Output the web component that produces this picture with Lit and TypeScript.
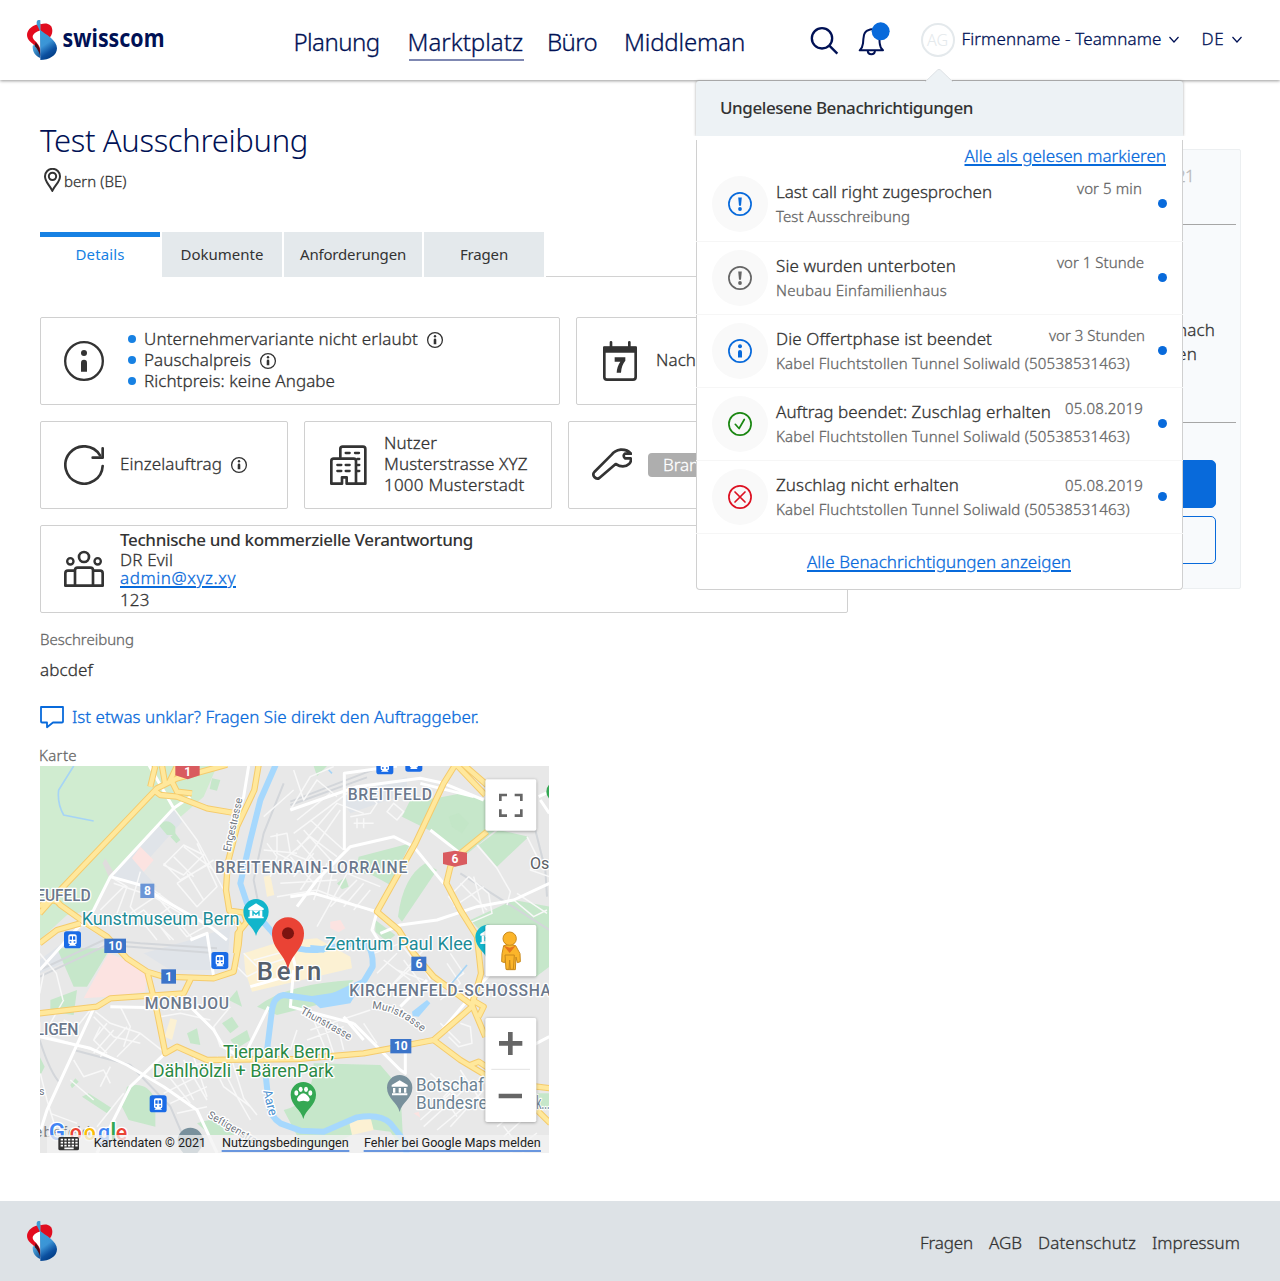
import { LitElement, html, svg, css, nothing, TemplateResult } from 'lit';
import { customElement } from 'lit/decorators.js';
import { styleMap } from 'lit/directives/style-map.js';

const FAMILY = '"Noto Sans", "Open Sans", sans-serif';
const ctx = document.createElement('canvas').getContext('2d')!;

/** Tracks a single line of text so that it occupies `width` pixels. */
function fit(text: string, width: number, size = 17, weight = 350): TemplateResult {
  ctx.font = `${weight} ${size}px ${FAMILY}`;
  const spacing = (width - ctx.measureText(text).width) / text.length;
  return html`<span
    style=${styleMap({
      letterSpacing: `${spacing.toFixed(3)}px`,
      fontSize: `${size}px`,
      fontWeight: `${weight}`,
      whiteSpace: 'nowrap',
      fontVariantLigatures: 'none',
      webkitTextStroke: weight === 350 ? '0.3px currentColor' : '0',
    })}>${text}</span>`;
}

const brandMark = html`<svg width="30" height="40" viewBox="81 60 90 120">
  <defs>
    <linearGradient id="b1" x1="0.2" y1="0" x2="0.6" y2="1">
      <stop offset="0" stop-color="#3a9edb" /><stop offset="0.45" stop-color="#3b94d6" />
      <stop offset="0.75" stop-color="#0c50a0" /><stop offset="1" stop-color="#003a80" />
    </linearGradient>
    <linearGradient id="b2" x1="0" y1="0" x2="1" y2="1">
      <stop offset="0" stop-color="#5ab4e8" /><stop offset="1" stop-color="#0d4f94" />
    </linearGradient>
  </defs>
  <path d="M122 71C100 73 81 87 81 105c0 16 15 23 24 33 7 9 12 19 16 30z" fill="#e30b1e" />
  <path d="M122 73c16-6 35-2 35 20 0 10-5 17-10 22L121 92z" fill="#e00d1f" />
  <path d="M121 91C108 96 99 102 98 110c0 8 12 15 17 24 3 5 5 9 6 14z" fill="#fff" />
  <path d="M98 137c-1 20 9 31 23 37v-14C115 148 108 138 103 134z" fill="url(#b2)" />
  <path d="M107 127c9 10 14 19 14 41-4-12-9-22-17-30z" fill="#4a0a14" />
  <path d="M120 90c16 12 51 30 51 55 0 22-24 35-50 35z" fill="url(#b1)" />
  <path d="M111 63q4-5 10-2v34l-8-16q-5-8-2-16z" fill="#3f9bd3" />
</svg>`;

const smallInfo = html`<svg class="hint" width="18" height="18" viewBox="0 0 18 18">
  <circle cx="9" cy="9" r="7.4" fill="none" stroke="#333" stroke-width="1.3" />
  <circle cx="9" cy="5.3" r="1.2" fill="#333" />
  <path d="M7.700 13.300V9q0-1.400 1.300-1.400T10.300 9v4.300z" fill="#333" />
</svg>`;

const icon = (box: string, body: TemplateResult) =>
  html`<svg class="icon" width="40" height="40" viewBox=${box} fill="none" stroke="#333"
    stroke-width="8" stroke-linecap="round" stroke-linejoin="round">${body}</svg>`;

const icons = {
  info: icon('132 123 120 120', svg`<circle cx="192" cy="183" r="56.500" stroke-width="7"/>
    <circle cx="192" cy="159" r="9" fill="#333" stroke="none"/>
    <path d="M183 215v-27q0-9 9-9t9 9v27z" fill="#333" stroke="none"/>`),
  calendar: icon('480 123 120 120', svg`<path d="M493 143h94v88q0 8-8 8h-78q-8 0-8-8z"/>
    <path d="M490 140h100v18h-100z" fill="#333" stroke="none"/>
    <path d="M513 127v18M568 127v18"/>
    <path d="M524 172h32v10q-12 14-13 36h-13q1-19 11-33h-17z" fill="#333" stroke="none"/>`),
  cycle: icon('132 435 120 120', svg`<path d="M248 498a56 56 0 1 1-8-32"/>
    <path d="M218 473h30v-28"/>`),
  building: icon('924 435 120 120', svg`<path d="M961 472v-25q0-7 7-7h61q7 0 7 7v104h-28"/>
    <path d="M934 551v-68q0-7 7-7h60q7 0 7 7v68h-28v-19h-14v19z"/>
    <path d="M977 459h12M1005 459h12M952 495h12M977 495h12M952 513h12M977 513h12M1012 477h6M1012 495h6M1012 513h6" stroke-width="7"/>`),
  team: icon('132 747 120 120', svg`<circle cx="192" cy="771" r="15"/>
    <circle cx="151" cy="784" r="9.500" stroke-width="7"/><circle cx="233" cy="784" r="9.500" stroke-width="7"/>
    <path d="M165 857v-46q0-8 8-8h38q8 0 8 8v46"/>
    <path d="M163 812h-19q-8 0-8 8v37h112v-37q0-8-8-8h-19"/>`),
  tool: icon('456 435 120 120', svg`<path d="M573 461q-11-13-31-12-18 3-27 15l-52 52q-6 7 0 15 7 8 15 3l49-42q24 15 41-1 7-8 4-16h-17q-8-8 0-14z"/>`),
};

const statusMarks: Record<string, TemplateResult> = {
  alert: svg`<path d="M10.200 5.500h3.600l-.8 8.300h-2z" fill="currentColor" stroke="none"/>
    <circle cx="12" cy="17" r="1.900" fill="currentColor" stroke="none"/>`,
  info: svg`<circle cx="12" cy="7.200" r="2" fill="currentColor" stroke="none"/>
    <path d="M10 18.500v-5.500q0-2 2-2t2 2v5.500z" fill="currentColor" stroke="none"/>`,
  check: svg`<path d="M7.300 12.300l3.800 4.200L16.300 7.500"/>`,
  cross: svg`<path d="M7 7l10 10M17 7L7 17"/>`,
};

const notices = [
  { mark: 'alert', tone: 'blue', title: ['Last call right zugesprochen', 216], sub: ['Test Ausschreibung', 134], time: ['vor 5 min', 65], inset: 2, first: true },
  { mark: 'alert', tone: 'gray', title: ['Sie wurden unterboten', 180], sub: ['Neubau Einfamilienhaus', 171], time: ['vor 1 Stunde', 87], inset: 0 },
  { mark: 'info', tone: 'blue', title: ['Die Offertphase ist beendet', 216], sub: ['Kabel Fluchtstollen Tunnel Soliwald (50538531463)', 354], time: ['vor 3 Stunden', 96], inset: -1 },
  { mark: 'check', tone: 'green', title: ['Auftrag beendet: Zuschlag erhalten', 275], sub: ['Kabel Fluchtstollen Tunnel Soliwald (50538531463)', 354], time: ['05.08.2019', 78], inset: 1 },
  { mark: 'cross', tone: 'red', title: ['Zuschlag nicht erhalten', 183], sub: ['Kabel Fluchtstollen Tunnel Soliwald (50538531463)', 354], time: ['05.08.2019', 78], inset: 1, last: true },
] as const;

@customElement('city-map')
export class CityMap extends LitElement {
  static styles = css`
    :host { display: block; }
    svg { display: block; }
    text { font-family: Roboto, sans-serif; }
    .halo { stroke: #fff; stroke-width: 8px; paint-order: stroke; stroke-linejoin: round; }
    .area { fill: #6b788c; font-size: 47px; font-weight: 500; }
    .poi { fill: #1d8c96; font-size: 55px; }
    .park { fill: #2b8a44; font-size: 55px; }
    .office { fill: #6c8394; font-size: 55px; }
    .city { fill: #56606d; font-size: 77px; font-weight: 500; }
    .street { fill: #6f7680; font-size: 32px; }
    .plain { fill: #5b6066; font-size: 50px; }
    .badge { fill: #fff; font-size: 36px; font-weight: 700; text-anchor: middle; }
    .legal { fill: #222; font-size: 39px; }
    .green { fill: #c6e7ca; }
    .forest { fill: #d0ecd0; }
    .rose { fill: #fce3e1; }
    .sand { fill: #fcf1d3; }
    .block { fill: #e0e4e9; }
    .minor { stroke: #f8f8f8; stroke-width: 4.500px; fill: none; stroke-linejoin: round; }
    .lane { stroke: #fff; stroke-width: 9px; fill: none; stroke-linejoin: round; }
    .rail { stroke: #d3d6da; stroke-width: 6px; fill: none; }
    .case { stroke: #f5cb6c; fill: none; stroke-width: 19px; stroke-linejoin: round; }
    .main { stroke: #ffe89c; fill: none; stroke-width: 13px; stroke-linejoin: round; }
    .water { stroke: #a6d8fd; fill: none; stroke-width: 18px; stroke-linejoin: round; }
    .lake { fill: #a6d8fd; }
    .btn { fill: #fff; filter: drop-shadow(0 2px 5px rgba(0, 0, 0, 0.35)); }
  `;

  private label(t: string, x: number, y: number, w: number, cls: string) {
    const adjust = cls === 'area' || cls === 'city' ? 'spacing' : 'spacingAndGlyphs';
    return svg`<text class="halo ${cls}" x=${x} y=${y} textLength=${w} lengthAdjust=${adjust}>${t}</text>`;
  }
  private badge(t: string, x: number, y: number, w: number, color = '#3b74c9') {
    return svg`<rect x=${x} y=${y} width=${w} height="43" fill=${color}/><text class="badge" x=${x + w / 2} y=${y + 34}>${t}</text>`;
  }
  private train(x: number, y: number) {
    return svg`<g transform="translate(${x} ${y})"><rect width="51" height="51" rx="8" fill="#1a6be6"/>
      <path d="M13 14q0-5 6-5h13q6 0 6 5v20q0 5-6 5h-13q-6 0-6-5z M14 43l6-6h11l6 6z" fill="#fff"/>
      <path d="M17 15h7v10h-7zM27 15h7v10h-7zM17 30h5v4h-5zM29 30h5v4h-5z" fill="#1a6be6"/></g>`;
  }
  private pin(x: number, y: number, color: string, body: unknown) {
    return svg`<g transform="translate(${x} ${y})"><path d="M0 73C-6 45-38 32-38 0a38 38 0 0 1 76 0C38 32 6 45 0 73z" fill=${color}/>${body}</g>`;
  }

  render() {
    const temple = svg`<path d="M-24-8L0-22 24-8v5h-48zM-20 1h7v14h-7zM-3 1h7v14h-7zM13 1h7v14h-7zM-23 17h46v6h-46z" fill="#fff"/>`;
    const museum = svg`<path d="M-23-10L0-25 23-10v5h-46z M-19-4h38v20h-38z M-23 15h46v5h-46z" fill="#fff"/><path d="M-9 12V0L0 8 9 0v12" stroke="#12b5cb" stroke-width="4" fill="none"/>`;
    const yellow = [
      'M28 520L90 450 380 145 440 115 590 74',
      'M28 500Q70 465 90 495L160 545 230 590 290 655 350 695 400 710 550 715 610 695 625 615 630 560 600 515',
      'M28 610L80 570 150 550',
      'M685 74L672 150 620 260 592 370 587 450 597 512 640 518 650 545 622 580 617 640',
      'M370 150L390 165 440 170 530 205 630 222M360 140L375 78M405 135L395 78M415 130L440 78M420 115L440 155 485 160',
      'M28 820L200 800 240 775 460 760 482 715',
      'M352 700L378 805 405 940 440 920 530 960 800 957 1000 940 1080 925 1210 900 1325 800 1338 740',
      'M1275 74L1240 130 1155 310 1040 515 1105 570 1150 640 1210 710 1325 795',
      'M1278 74L1365 165M1300 74L1370 135',
      'M1370 275L1290 340 1260 380 1248 430 1290 510 1340 590 1352 700 1325 795 1365 890',
      'M1325 780L1360 800 1345 830',
      'M1210 900L1290 960 1365 1005 1480 1035 1560 1045M1320 975L1345 965 1375 985M1510 1100L1560 1150',
    ];
    return html`<svg width="509" height="387" viewBox="29 78 1527 1161" preserveAspectRatio="none">
      <rect x="28" y="78" width="1530" height="1165" fill="#e8e8e8" />
      <path class="forest" d="M28 78H560L520 170 440 240 430 205 240 410 190 510 110 525 28 600z" />
      <path class="block" d="M430 205L455 245 330 385 380 440 350 450 245 410zM28 660L160 560 230 600 200 625 28 700zM340 640L480 600 600 560 590 690 420 690zM930 170l200-60v50l-170 60z" />
      <path class="green" d="M545 115l25 5-10 32-22-5zM385 255q25-25 50 5v25h-25zM420 290l15-10 15 20-12 10zM850 78h40l-30 30zM80 625H240L170 740 130 740zM60 780l80-30-10 75-70-10zM28 950l15 30-15 30z
        M1215 175l80-15 90 25 40 60-130 110-80-75-100-50 25-50zM1345 315l60-45 90 20-95 90zM985 350l155-40-60 125-55-30-50-10zM1185 370l35 20-105 155-12-15q15-120 82-160zM1035 540l60 45-25 20-35-30zM920 430l25-20 10 30-20 8z
        M1320 540l130-60 107 20v180l-40 30-150-120zM1520 1060h36v50l-36-5zM620 750l15 50-40-20zM575 850l30-20 20 30-25 20zM470 880l30-15 10 50-30-5zM600 900l50-30 10 30-40 25z
        M145 1025l-20 20-5-10 15-20zM155 1070l20-10 70 45-15 15zM290 1040q60-20 85 40v80l-80-20-20-40zM500 1150q120-40 110 35h-70z
        M760 1110q90-20 90-140l200 5 60 70 10 190-40-60-80-10-110 60-80-20zM680 800q90-70 290-80l-50 60-180 45z" />
      <path d="M1255 230l30-10 30 30-20 30-30-20z" opacity=".5" fill="#bfe5c3" />
      <path class="rose" d="M330 320l40 40-30 35-35-40zM160 775L235 640 350 685 345 755 230 770zM900 545l30-5 15 25-20 12-25-12zM1150 1120l15-5 5 18z" />
      <path d="M225 355l30 50-20 5-18-40z" fill="#dfdcdc" />
      <path class="sand" d="M640 640l110-35 110-10 100 55 5 35-300 70-20-60zM700 410l20-5 12 60-22 5zM420 835l20 5-15 60-22-10zM955 1140l65-10 10 40-65 15z" />
      <g class="rail">
        <path d="M780 185L1000 100 1060 78M780 195L1010 112M28 900Q60 1000 90 1030M130 930L300 975 420 1100 480 1239M1290 400L1557 570M1515 270L1545 390 1550 470M28 690L220 600 330 610 560 625M760 130L700 280 670 420 690 520M28 710L230 615 560 640" />
      </g>
      <g class="minor">
        <path d="M430 205L500 300 580 450M240 410L290 440 260 520M250 430L370 470 500 550M330 395L300 500 380 600M280 440L210 510M370 450l120 90M400 375l60-60 60 30-60 60zM430 350l60 60M460 320l90 70M400 370l50 50 90-50M440 430l110-70M500 310l60 130-60 60-60-70M470 400l50 80M380 470l110 130M300 520l90-60M280 550l60-40 90 90M340 560l80-60M360 520l60 80M420 530l50 60 90-50" />
        <path d="M790 90l30 90 40-60 60 50M780 210l60-100 70-30M800 240l100-80M790 280l160-120M800 330l120-140 80 30M820 370l110-160M760 360l80-70 80 60M840 240l100 90M820 270l90 100M800 300l80 90M780 350l70 80M790 410l60-70M810 450l60-90M850 480l40-110M890 470l20-90M750 430l170-10M740 470l120-20M860 560l90-160 100 40M900 500l80-80M940 500l60-70M970 510l50-60M860 450l180 70" />
        <path d="M720 290l50-10 10 60 50 20M710 310l30 40-20 60M740 280v60l60 30M700 330l100 10M960 230l60-10 20-30-50-50M970 250h60M980 235v30M1000 235v30M1070 215l20-25 30 25-20 25zM700 230l90-80" />
        <path d="M195 815L240 850 330 880 400 935M190 830l60 60 80 20M210 860l-20 40 40 40M230 850l-40 50M250 870l-60 70M290 860l-80 90M330 880l-70 70M270 800l30 60-20 60M390 830l60-10 90 20M60 850l40-70M100 840l40 20 40-50M130 960l30 50 60-20 20 40M240 980l-30 60M120 1020l70 60M280 1060l-80 100" />
        <path d="M400 990l80 100M430 970l60 110M460 960l70 120M490 950l40 120M400 1060l120-60M420 1090l110-50M440 1120l90-20M370 1020l140-50M540 960l40 80 80 60M560 950l60 120 40 70M600 945l40 130 40 50M600 800l-50 60 20 60 80 30" />
        <path d="M840 870l180-60M830 900l110-40M850 840l40 100M880 850l30 90M920 850l20 80M800 870l-20 60M1000 850l40 60M1040 700l60-60M1080 740l100-110M1100 690l80 30M1060 660l80 60M1120 660l60 80M1150 630l50 90M1180 650l-110 100M1230 780l60-50-40-60M1260 640l40 60-70 50" />
        <path d="M1290 850l30 10 5 50-40 10-30-30M1230 850l60 60M1300 1010l-60 60 40 60M1200 1000l80 70M1170 1140l90-80M1180 1160l120-110M1220 1170l120-100M1260 1160l100-110M1290 990l60 90 70 60M1400 1160l120-100M1420 1190l90-80M1480 1239l-60-80M1440 1239l80-60" />
        <path d="M1255 470l60-60 60 50 10 60-70 30zM1290 430l80 80M1330 410l30 110M1270 500l90-60M1340 315l60 70 40 70-10 40M1490 290l30 60-20 40 57 20M1450 480l60 50 40-20M1460 460l90 60" />
        <path d="M620 680l30 30 40-20 40 30M640 640l60 60M670 660l110-30M690 680l90-30M1030 640l80-30 40 50M28 640l50 60 20 80M40 700l-12 60M28 880l60 20 100 30M30 1000l20 80 30 100M60 1120l80 30" />
      </g>
      <g class="lane">
        <path d="M355 74L430 205 480 170M430 205L240 410 190 510 28 690M655 78L640 170 600 300M240 410L330 435 400 480 540 560 590 600M660 740L800 700 780 620M28 890L180 925 290 975 400 1040 500 1110 560 1239M190 805L50 1110 28 1180M410 935L300 1040 200 1239M480 600L530 580 550 710M480 800L550 870 580 920 640 960M640 950L715 800M240 800L380 803M970 850L1110 990 1125 1000V930M970 850L780 800 790 690M940 830L1000 900" />
        <path d="M942 330V100L1100 78M780 210L980 140 1170 115 1240 130 1360 180M1170 130L1330 170M800 500L860 420 960 320 1090 290 1150 320 1240 430M780 470L850 460 1040 515 1025 570 1050 610M1050 580L1110 555 1220 540 1340 500 1450 480 1557 430M1200 270L1290 340M1525 170L1557 155M1530 180L1557 220M1210 900L1380 700M1190 720L1110 800M1557 890L1500 920" />
      </g>
      <path d="M130 78L85 150Q80 190 100 225L190 243M1260 735l50-60M895 90l10 10" stroke="#a6d4f5" stroke-width="5" fill="none" />
      <path class="water" d="M738 70L690 180 660 300 630 430 650 490 720 570Q770 635 860 630L960 612Q1030 590 1027 680L1000 725 880 782 760 765Q730 770 725 810L712 915 705 995 715 1090Q720 1130 750 1150L810 1172 880 1175 980 1132Q1050 1120 1080 1150L1120 1200 1130 1245" />
      <path class="lake" d="M830 770l70-10 90-20-30 50-90 15zM1145 815l45-35 10 10-35 40-18-2zM840 615l60 5-20 18-40-5z" />
      ${yellow.map((d) => svg`<path class="case" d=${d}/>`)}
      ${yellow.map((d) => svg`<path class="main" d=${d}/>`)}

      ${this.badge('8', 330, 431, 42, '#6b95d6')} ${this.badge('10', 222, 596, 65)}
      ${this.badge('1', 393, 688, 44)} ${this.badge('6', 1143, 650, 45)} ${this.badge('10', 1080, 897, 63)}
      <path d="M435 70h73v36l-36 12-37-12z" fill="#d95b5f" /><text class="badge" x="472" y="107">1</text>
      <path d="M1238 338l36-6 36 6v34l-36 8-36-8z" fill="#d95b5f" /><text class="badge" x="1274" y="368">6</text>
      ${this.train(101, 574)} ${this.train(543, 636)} ${this.train(358, 1066)} ${this.train(1038, 52)} ${this.train(1125, 44)}

      ${this.label('EUFELD', 18, 482, 163, 'area')} ${this.label('BREITENRAIN-LORRAINE', 554, 400, 577, 'area')}
      ${this.label('BREITFELD', 952, 181, 253, 'area')} ${this.label('MONBIJOU', 343, 807, 253, 'area')}
      ${this.label('LIGEN', 16, 885, 128, 'area')} ${this.label('KIRCHENFELD-SCHOSSHA', 957, 767, 605, 'area')}
      ${this.label('Os', 1499, 388, 58, 'plain')}
      <text class="halo street" transform="translate(600 336) rotate(-77)" textLength="164">Engestrasse</text>
      <path id="muri" d="M1025 806Q1100 810 1170 872" fill="none" />
      <text class="halo street"><textPath href="#muri">Muristrasse</textPath></text>
      <text class="halo street" transform="translate(808 818) rotate(29)" textLength="170">Thunstrasse</text>
      <text class="halo street" transform="translate(530 1131) rotate(30)" textLength="180">Seftigenstras</text>
      <text class="halo street" transform="translate(26 1066)" >s</text>
      <text class="halo" transform="translate(698 1053) rotate(76)" font-size="38" fill="#4a90cf">Aare</text>
      ${this.label('Kunstmuseum Bern', 154, 555, 473, 'poi')} ${this.label('Zentrum Paul Klee', 884, 629, 442, 'poi')}
      ${this.label('Tierpark Bern,', 578, 955, 333, 'park')} ${this.label('Dählhölzli + BärenPark', 367, 1010, 542, 'park')}
      ${this.label('Botschaf', 1157, 1052, 204, 'office')} ${this.label('Bundesre', 1157, 1106, 215, 'office')}
      ${this.label('k...', 1518, 1106, 40, 'office')}

      ${this.pin(677, 515, '#12b5cb', museum)} ${this.pin(1373, 592, '#12b5cb', museum)}
      ${this.pin(819, 1064, '#34a853', svg`<g fill="#fff"><path d="M0-4q12 2 19 16 0 10-10 8-9-3-18 0-10 2-10-8Q-12-2 0-4z"/><ellipse cx="-21" cy="-5" rx="6" ry="8"/><ellipse cx="-8" cy="-16" rx="6" ry="8"/><ellipse cx="8" cy="-16" rx="6" ry="8"/><ellipse cx="21" cy="-5" rx="6" ry="8"/></g>`)}
      ${this.pin(1108, 1043, '#78909c', temple)} ${this.pin(480, 1201, '#78909c', nothing)}
      <circle cx="1578" cy="155" r="30" fill="#34a853" />
      ${this.label('Bern', 679, 720, 194, 'city')}
      <path d="M773 692C768 645 725 630 725 580a48 48 0 0 1 96 0C821 630 778 645 773 692z" fill="#ea4335" />
      <circle cx="773" cy="580" r="18" fill="#7d1410" />

      <text x="12" y="1190" font-size="45" fill="#7c7f84" textLength="168">ebefeld</text>
      <g font-size="72" font-weight="500" class="halo">
        <text x="55" y="1200" fill="#4285f4">G</text><text x="118" y="1200" font-size="64" fill="#ea4335">o</text>
        <text x="160" y="1200" font-size="64" fill="#fbbc05">o</text><text x="203" y="1200" font-size="64" fill="#4285f4">g</text>
        <text x="240" y="1200" fill="#34a853">l</text><text x="256" y="1200" font-size="64" fill="#ea4335">e</text>
      </g>
      <rect x="50" y="1185" width="1507" height="55" fill="#f3f3f3" opacity=".75" />
      <rect x="84" y="1191" width="62" height="40" rx="5" fill="#333" />
      <path d="M91 1199h7m4 0h7m4 0h7m4 0h7m4 0h7M91 1208h7m4 0h7m4 0h7m4 0h7m4 0h7M91 1217h7m4 0h7m4 0h7m4 0h7m4 0h7M102 1225h28" stroke="#fff" stroke-width="5" />
      <text class="legal" x="190" y="1222" textLength="337" lengthAdjust="spacingAndGlyphs">Kartendaten © 2021</text>
      <text class="legal" x="575" y="1222" textLength="380" lengthAdjust="spacingAndGlyphs">Nutzungsbedingungen</text>
      <text class="legal" x="1001" y="1222" textLength="530" lengthAdjust="spacingAndGlyphs">Fehler bei Google Maps melden</text>
      <path d="M574 1233h383M1000 1233h532" stroke="#3c78d8" stroke-width="4" />

      <rect class="btn" x="1365" y="118" width="153" height="154" rx="5" />
      <path d="M1410 183v-18h20M1453 165h20v18M1473 208v19h-20M1430 227h-20v-19" fill="none" stroke="#666" stroke-width="8" />
      <rect class="btn" x="1365" y="555" width="153" height="154" rx="5" />
      <g stroke="#c98a1c" stroke-width="3" fill="#fbb52a">
        <path d="M1420 617q18-8 36 0l13 24 1 24-9 3-4-17-2 38h-26l-2-38-4 17-9-3 1-24z" />
        <path d="M1424 645h28l-3 43h-9l-2-28-2 28h-9z" />
        <circle cx="1438" cy="596" r="20" />
      </g>
      <path d="M1420 617l18 22 18-22-18 6z" fill="#e5741d" />
      <rect class="btn" x="1365" y="834" width="153" height="312" rx="5" />
      <path d="M1406 910h70M1440 876v69M1405 1068h70" stroke="#666" stroke-width="14" />
      <path d="M1383 988h116" stroke="#e2e2e2" stroke-width="3" />
    </svg>`;
  }
}

@customElement('app-root')
export class AppRoot extends LitElement {
  static styles = css`
    :host { display: block; position: relative; width: 1280px; height: 1281px; overflow: hidden; background: #fff; color: #333; font-family: 'Noto Sans', 'Open Sans', sans-serif; font-size: 17px; }
    * { box-sizing: border-box; }
    svg { display: block; flex: none; }
    .top { display: flex; align-items: center; height: 80px; padding-left: 27px; color: #001155; box-shadow: 0 1px 3px rgba(0, 0, 0, 0.4); line-height: 34px; }
    .word { margin-left: 5px; overflow: visible; }
    .nav { display: flex; margin-left: 127.5px; width: 516.5px; }
    .nav-item { position: relative; padding: 6px 0 2px; line-height: 34px; height: 42px; }
    .nav-item.n1 { margin-left: 28px; }
    .nav-item.n2 { margin-left: 24px; }
    .nav-item.n3 { margin-left: 27px; }
    .nav-item.on::after { content: ''; position: absolute; left: 1px; right: -1px; bottom: 0; height: 2px; background: #7f88b2; }
    .find { margin-top: 2px; }
    .bell { margin: -2px 0 0 18px; }
    .avatar { width: 34px; height: 34px; border: 2px solid #e4e9ec; border-radius: 50%; margin-left: 29.5px; color: #e4e9ec; display: flex; align-items: center; justify-content: center; }
    .who { margin: -2px 0 0 7px; }
    .chev { margin-left: 6px; }
    .lang { margin: -2px 0 0 22px; }
    .body { display: grid; grid-template-columns: 809px 377px; column-gap: 15px; padding-left: 40px; height: 1121px; align-items: start; }
    .title { margin: 39px 0 0 0; line-height: 40px; color: #001155; font-weight: 300; -webkit-text-stroke: 0.2px; }
    .place { display: flex; height: 24px; line-height: 24px; margin: 8px 0 0 4px; }
    .place span { margin-left: 3px; padding-top: 1px; }
    .tabs { display: flex; gap: 2px; margin-top: 40px; height: 45px; }
    .tab { width: 120px; background: #e4e9ec; display: flex; align-items: center; justify-content: center; line-height: 20px; padding-bottom: 1px; }
    .tab.wide { width: 138px; }
    .tab.on { background: #fff; border-top: 5px solid #1781e3; padding-bottom: 6px; color: #1781e3; }
    .tab-rest { flex: 1; border-bottom: 1px solid #d2d2d2; }
    .cards { display: flex; flex-direction: column; gap: 16px; margin-top: 40px; width: 808px; }
    .row { display: flex; gap: 16px; }
    .card { height: 88px; border: 1px solid #d0d0d0; border-radius: 2px; display: flex; align-items: center; gap: 16px; padding-left: 23px; flex: 1; }
    .card.c520 { flex: none; width: 520px; }
    .card.c248 { flex: none; width: 248px; }
    .card.full { flex: none; }
    .copy { line-height: 21px; padding-bottom: 3px; }
    .line { display: flex; align-items: center; height: 21px; white-space: nowrap; }
    .list { padding-left: 8px; }
    .list .line::before { content: ''; width: 8px; height: 8px; border-radius: 50%; background: #1781e3; margin: 1px 8px 0 0; }
    .hint { margin: 2px 0 0 8px; }
    .chip { background: #aeaeae; color: #fff; border-radius: 4px; height: 24px; width: 120px; line-height: 23px; padding-left: 15px; }
    .contact { line-height: 20px; padding-top: 1px; }
    .contact div { height: 20px; white-space: nowrap; }
    .contact .mail { margin: -2px 0 2px; }
    .link { color: #086adb; border: 0; position: relative; display: inline-block; text-decoration: underline; text-decoration-thickness: 2px; text-underline-offset: 2px; white-space: nowrap; }
    .caption { color: #666; line-height: 20px; height: 20px; margin-top: 16px; }
    .text { line-height: 24px; height: 24px; margin-top: 9px; }
    .ask { display: flex; align-items: center; gap: 8px; color: #086adb; line-height: 24px; height: 24px; margin-top: 23px; }
    .ask span { margin-top: -1px; }
    .map-label { margin: 16px 0 1px -1px; }
    .side { margin-top: 69px; height: 440px; border: 1px solid #eceff1; border-radius: 2px; background: #f8fafc; padding: 0 24px; line-height: 24px; display: flex; flex-direction: column; }
    .side .date { text-align: right; margin: 14px 22px 0 0; color: #b9b9b9; }
    .side hr { margin: 36px -20px 0; border: 0; border-top: 1px solid #a6a6a6; flex: none; height: 0; }
    .side .note { text-align: right; margin: 93px 1px 0 0; height: 48px; }
    .side .note .end { padding-right: 18px; }
    .side hr.second { margin-top: 56px; }
    .btn { height: 48px; border-radius: 5px; border: 1px solid #086adb; flex: none; }
    .btn.fill { background: #086adb; margin: 37px 0 8px; }
    .foot { height: 80px; background: #dde2e6; display: flex; align-items: center; padding: 0 40px 0 27px; }
    .foot nav { margin-left: auto; display: flex; gap: 16px; padding-top: 2px; }
    .pop { position: absolute; left: 696px; top: 81px; width: 487px; }
    .pop-head { position: relative; height: 55px; background: #edf2f5; box-shadow: 0 0 3px rgba(0, 0, 0, 0.35); border-radius: 3px 3px 0 0; padding-left: 24px; line-height: 54px; clip-path: inset(-20px -4px 0 -4px); }
    .tip { position: absolute; left: 229px; top: -13px; }
    .pop-body { background: #fff; height: 454px; display: flex; flex-direction: column; padding-top: 4px; }
    .pop-frame { border: 1px solid #d0d0d0; border-top: 0; border-radius: 0 0 4px 4px; flex: 1; }
    .mark-all { display: flex; justify-content: flex-end; height: 28px; padding: 4px 16px 0 0; line-height: 24px; }
    .item { display: flex; height: 73px; margin: 0 -1px; padding: 0 16px; border-bottom: 1px solid #f6f6f6; }
    .item.first { height: 74px; }
    .disc { width: 56px; height: 56px; margin: 8px 8px 0 0; border-radius: 50%; background: #f9f9f9; display: flex; align-items: center; justify-content: center; flex: none; }
    .blue { color: #086adb; }
    .gray { color: #666; }
    .green { color: #1b8712; }
    .red { color: #dd1122; }
    .main { padding-top: 12px; line-height: 24px; width: 0; flex: 1; white-space: nowrap; }
    .sub { line-height: 20px; margin-top: 2px; color: #666; }
    .time { margin-top: 10px; line-height: 20px; height: 20px; color: #666; white-space: nowrap; }
    .time.low { margin-top: 14px; }
    .dot { width: 9px; height: 9px; border-radius: 50%; background: #086adb; margin: 31px 0 0 14px; flex: none; }
    .all { display: flex; justify-content: center; padding: 16px 1px 0 0; line-height: 24px; }
  `;

  private chevron() {
    return html`<svg class="chev" width="12" height="8" viewBox="0 0 12 8"><path d="M1.500 1l4.500 5 4.500-5" fill="none" stroke="#001155" stroke-width="1.200" /></svg>`;
  }

  private notice(n: (typeof notices)[number]) {
    return html`<div class="item ${'first' in n ? 'first' : ''}">
      <div class="disc ${n.tone}">
        <svg width="24" height="24" viewBox="0 0 24 24" fill="none" stroke="currentColor" stroke-width="1.700" stroke-linecap="round" stroke-linejoin="round">
          <circle cx="12" cy="12" r="11.100" />${statusMarks[n.mark]}
        </svg>
      </div>
      <div class="main"><div>${fit(n.title[0], n.title[1])}</div><div class="sub">${fit(n.sub[0], n.sub[1], 15)}</div></div>
      <div class="time ${'last' in n ? 'low' : ''}" style=${styleMap({ transform: `translateX(${-n.inset}px)` })}>${fit(n.time[0], n.time[1], 15)}</div>
      <div class="dot"></div>
    </div>`;
  }

  render() {
    return html`
      <header class="top">
        ${brandMark}
        <svg class="word" width="104" height="40" viewBox="0 0 104 40">
          <text x="0.500" y="26.500" font-size="25" font-weight="700" fill="#001155" textLength="102" lengthAdjust="spacingAndGlyphs">swisscom</text>
        </svg>
        <nav class="nav">
          <div class="nav-item">${fit('Planung', 86, 24)}</div>
          <div class="nav-item n1 on">${fit('Marktplatz', 115.5, 24)}</div>
          <div class="nav-item n2">${fit('Büro', 50, 24)}</div>
          <div class="nav-item n3">${fit('Middleman', 121, 24)}</div>
        </nav>
        <svg class="find" width="30" height="30" viewBox="90 81 90 90" fill="none" stroke="#001155" stroke-width="7">
          <circle cx="126" cy="118" r="30.500" /><path d="M148 140l24 24" />
        </svg>
        <svg class="bell" width="33" height="34" viewBox="234 66 99 102" fill="none" stroke="#001155" stroke-width="6" stroke-linejoin="round">
          <path d="M239 151h70q-9-8-10-22-1-27-7-33-5-5-11-6-7-5-14 0-12 3-15 15-2 10-3 25-1 12-10 21zM263 152q1 11 11 11t11-11" />
          <circle cx="302" cy="94" r="27" fill="#086adb" stroke="none" />
        </svg>
        <div class="avatar">${fit('AG', 21, 16, 300)}</div>
        <div class="who">${fit('Firmenname - Teamname', 200)}</div>
        ${this.chevron()}
        <div class="lang">${fit('DE', 23)}</div>
        ${this.chevron()}
      </header>

      <main class="body">
        <section>
          <h1 class="title">${fit('Test Ausschreibung', 268, 31, 300)}</h1>
          <div class="place">
            <svg width="17" height="24" viewBox="132 504 51 72" fill="none" stroke="#333" stroke-width="6">
              <path d="M157 572C146 551 135 546 135 529a22.500 22.500 0 0 1 45 0C180 546 168 551 157 572z" /><circle cx="157.500" cy="529" r="11" />
            </svg>
            ${fit('bern (BE)', 62.5, 15)}
          </div>
          <div class="tabs">
            <div class="tab on">${fit('Details', 49, 15, 400)}</div>
            <div class="tab">${fit('Dokumente', 83, 15, 400)}</div>
            <div class="tab wide">${fit('Anforderungen', 106, 15, 400)}</div>
            <div class="tab">${fit('Fragen', 48, 15, 400)}</div>
            <div class="tab-rest"></div>
          </div>
          <div class="cards">
            <div class="row">
              <div class="card c520">${icons.info}
                <div class="copy list">
                  <div class="line">${fit('Unternehmervariante nicht erlaubt', 274)}${smallInfo}</div>
                  <div class="line">${fit('Pauschalpreis', 107)}${smallInfo}</div>
                  <div class="line">${fit('Richtpreis: keine Angabe', 191)}</div>
                </div>
              </div>
              <div class="card">${icons.calendar}<div class="copy">${fit('Nach', 40)}</div></div>
            </div>
            <div class="row">
              <div class="card c248">${icons.cycle}
                <div class="copy"><div class="line">${fit('Einzelauftrag', 102)}${smallInfo}</div></div>
              </div>
              <div class="card c248">${icons.building}
                <div class="copy">
                  <div class="line">${fit('Nutzer', 53)}</div>
                  <div class="line">${fit('Musterstrasse XYZ', 143.5)}</div>
                  <div class="line">${fit('1000 Musterstadt', 140.5)}</div>
                </div>
              </div>
              <div class="card">${icons.tool}<div class="chip">${fit('Bran', 36)}</div></div>
            </div>
            <div class="card full">${icons.team}
              <div class="contact">
                <div>${fit('Technische und kommerzielle Verantwortung', 353, 17, 500)}</div>
                <div>${fit('DR Evil', 53)}</div>
                <div class="mail"><a class="link">${fit('admin@xyz.xy', 116)}</a></div>
                <div>${fit('123', 29.5)}</div>
              </div>
            </div>
          </div>
          <div class="caption">${fit('Beschreibung', 94, 15)}</div>
          <div class="text">${fit('abcdef', 53)}</div>
          <div class="ask">
            <svg width="24" height="24" viewBox="0 0 24 24" fill="none" stroke="#086adb" stroke-width="1.800" stroke-linejoin="round"><path d="M1 2h22v14.500q0 1-1 1H13l-6 4.800v-4.800H2q-1 0-1-1z" /></svg>
            ${fit('Ist etwas unklar? Fragen Sie direkt den Auftraggeber.', 407)}
          </div>
          <div class="caption map-label">${fit('Karte', 38, 15)}</div>
          <city-map></city-map>
        </section>

        <aside class="side">
          <div class="date">${fit('21', 18, 17)}</div>
          <hr />
          <div class="note"><div>${fit('nach', 38)}</div><div class="end">${fit('en', 20)}</div></div>
          <hr class="second" />
          <div class="btn fill"></div>
          <div class="btn"></div>
        </aside>
      </main>

      <footer class="foot">
        ${brandMark}
        <nav>${fit('Fragen', 53)}${fit('AGB', 33)}${fit('Datenschutz', 98)}${fit('Impressum', 88)}</nav>
      </footer>

      <div class="pop">
        <div class="pop-head">
          <svg class="tip" width="28" height="14" viewBox="0 0 28 14"><path d="M0 14L12.500 2q1.500-1.300 3 0L28 14z" fill="#edf2f5" stroke="#dde1e4" stroke-width="1" stroke-dasharray="38 60" /></svg>
          ${fit('Ungelesene Benachrichtigungen', 253, 17, 500)}
        </div>
        <div class="pop-body">
          <div class="pop-frame">
            <div class="mark-all"><a class="link">${fit('Alle als gelesen markieren', 201.5)}</a></div>
            ${notices.map((n) => this.notice(n))}
            <div class="all"><a class="link">${fit('Alle Benachrichtigungen anzeigen', 264)}</a></div>
          </div>
        </div>
      </div>
    `;
  }
}
